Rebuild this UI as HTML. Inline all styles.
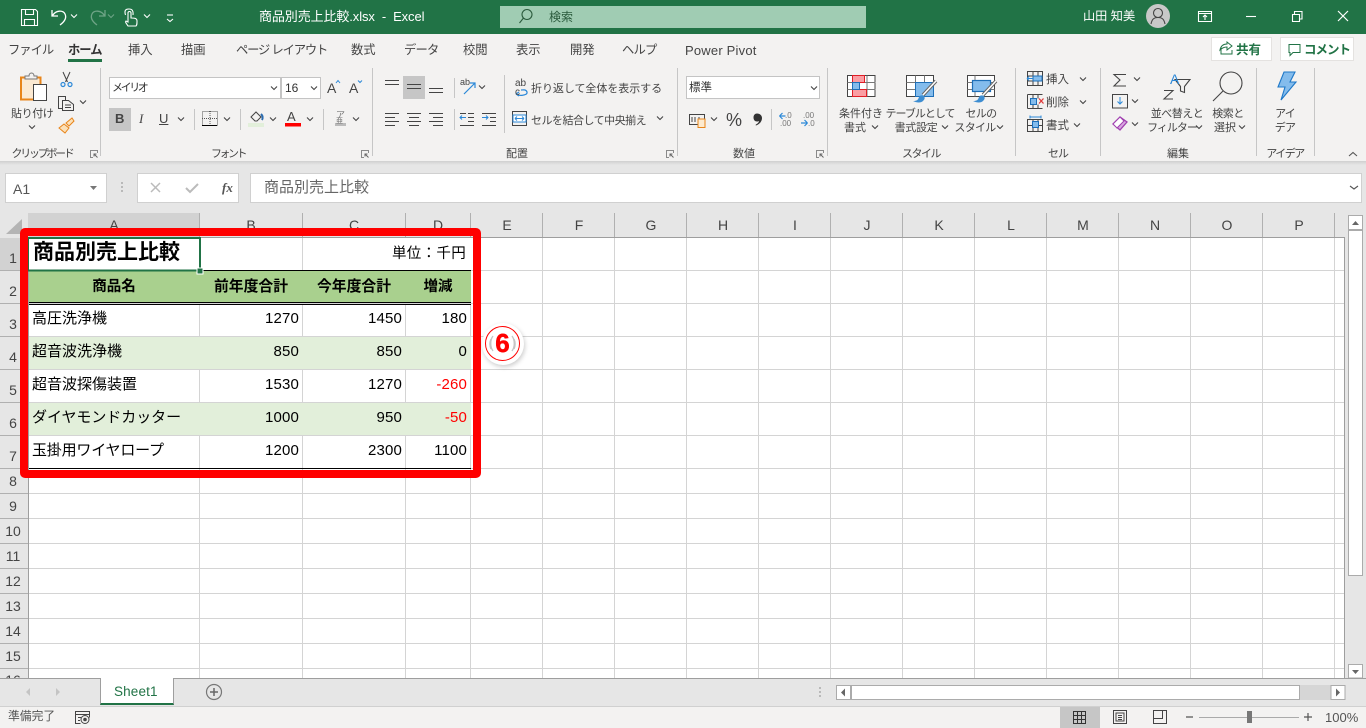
<!DOCTYPE html>
<html lang="ja"><head><meta charset="utf-8"><title>Excel</title>
<style>
html,body{margin:0;padding:0;width:1366px;height:728px;overflow:hidden;background:#fff}
body{position:relative;font-family:"Liberation Sans","Noto Sans CJK JP",sans-serif;color:#444}
.b{position:absolute}
svg{position:absolute;left:0;top:0}
.t{position:absolute;white-space:nowrap;line-height:1;font-size:11px;color:#444}
.c{transform:translateX(-50%)}
.r{text-align:right}
.tab{font-size:12.3px;top:44px}
.g{font-size:11px;top:149px}
.h{font-size:14px;color:#444;top:218px}
.rn{font-size:14px;color:#444;width:26px;left:0;text-align:center}
.n{font-size:15px;color:#000;letter-spacing:.15px}
.j{font-size:15px;color:#000}
.th{font-size:14px;font-weight:bold;color:#000;top:280px}
.red{color:#f00}
</style></head><body>
<div class="b" style="left:0;top:0;width:1366px;height:34px;background:#217346"></div>
<div class="b" style="left:0;top:34px;width:1366px;height:127px;background:#f3f2f1"></div>
<div class="b" style="left:0;top:161px;width:1366px;height:52px;background:#e6e6e6"></div>
<div class="b" style="left:0;top:161px;width:1366px;height:4px;background:linear-gradient(#cfcfcf,#e6e6e6)"></div>
<div class="b" style="left:500px;top:6px;width:366px;height:22px;background:#a0ccb3"></div>
<div class="b" style="left:1212px;top:38px;width:59px;height:22px;background:#fff;box-shadow:0 0 0 1px #e4e2e0"></div>
<div class="b" style="left:1281px;top:38px;width:72px;height:22px;background:#fff;box-shadow:0 0 0 1px #e4e2e0"></div>
<div class="b" style="left:68px;top:59px;width:34px;height:3px;background:#217346"></div>
<div class="b" style="left:109px;top:77px;width:170px;height:20px;background:#fff;border:1px solid #c4c4c4"></div>
<div class="b" style="left:281px;top:77px;width:38px;height:20px;background:#fff;border:1px solid #c4c4c4"></div>
<div class="b" style="left:686px;top:76px;width:132px;height:21px;background:#fff;border:1px solid #c4c4c4"></div>
<div class="b" style="left:109px;top:108px;width:22px;height:23px;background:#c6c6c6"></div>
<div class="b" style="left:403px;top:76px;width:22px;height:23px;background:#c6c6c6"></div>
<div class="b" style="left:5px;top:173px;width:100px;height:28px;background:#fff;border:1px solid #d0d0d0"></div>
<div class="b" style="left:137px;top:173px;width:100px;height:28px;background:#fff;border:1px solid #d0d0d0"></div>
<div class="b" style="left:250px;top:173px;width:1110px;height:28px;background:#fff;border:1px solid #d0d0d0"></div>

<svg width="1366" height="728" viewBox="0 0 1366 728" fill="none">
<defs><path id="v" d="M-3-1.5 0 1.5 3-1.5" stroke="#444" stroke-width="1.1"/><path id="w" d="M-3-1.5 0 1.5 3-1.5" stroke="#fff" stroke-width="1.1"/>
<g id="l"><path d="M.5.5h7v7h-7z" stroke="#8a8a8a" stroke-width="1"/><path d="M3 3h5v5H3z" fill="#f3f2f1"/><path d="M7.5 7.5 4 4M4 6.5V4h2.500" stroke="#666"/></g></defs>
<!-- sheet -->
<rect x="0" y="213" width="1366" height="465" fill="#e6e6e6"/>
<rect x="29" y="238" width="1315" height="440" fill="#fff"/>
<rect x="28" y="213" width="171" height="24" fill="#d2d2d2"/>
<rect x="0" y="238" width="28" height="32" fill="#d2d2d2"/>
<path d="M22 219 6 234H22z" fill="#b4b4b4"/>
<g stroke="#d4d4d4" stroke-width="1">
<path d="M199.500 238V678M302.500 238V678M405.500 271V678M470.500 271V678M542.500 238V678M614.500 238V678M686.500 238V678M758.500 238V678M830.500 238V678M902.500 238V678M974.500 238V678M1046.500 238V678M1118.500 238V678M1190.500 238V678M1262.500 238V678M1334.500 238V678"/>
<path d="M29 270.500H1344M29 303.500H1344M29 336.500H1344M29 369.500H1344M29 402.500H1344M29 435.500H1344M29 468.500H1344M29 493.500H1344M29 518.500H1344M29 543.500H1344M29 568.500H1344M29 593.500H1344M29 618.500H1344M29 643.500H1344M29 668.500H1344"/>
</g>
<g stroke="#b0b0b0"><path d="M199.500 213V237M302.500 213V237M405.500 213V237M470.500 213V237M542.500 213V237M614.500 213V237M686.500 213V237M758.500 213V237M830.500 213V237M902.500 213V237M974.500 213V237M1046.500 213V237M1118.500 213V237M1190.500 213V237M1262.500 213V237M1334.500 213V237"/>
<path d="M0 270.500H28M0 303.500H28M0 336.500H28M0 369.500H28M0 402.500H28M0 435.500H28M0 468.500H28M0 493.500H28M0 518.500H28M0 543.500H28M0 568.500H28M0 593.500H28M0 618.500H28M0 643.500H28M0 668.500H28"/>
</g>
<path d="M28.500 678V237.500H1344.500V678" stroke="#9e9e9e"/>
<rect x="29" y="271" width="442" height="31" fill="#a9d08e"/>
<rect x="29" y="337" width="442" height="32" fill="#e2efda"/>
<rect x="29" y="403" width="442" height="32" fill="#e2efda"/>
<path d="M29 270.500H471M29 302.500H471M29 304.500H471M29 468.500H471" stroke="#000"/>
<rect x="28" y="238" width="172" height="32.500" stroke="#217346" stroke-width="2"/>
<rect x="197" y="268" width="6" height="6" fill="#217346" stroke="#fff"/>
<!-- vertical scrollbar -->
<rect x="1348.500" y="215.500" width="14" height="14" fill="#fff" stroke="#ababab"/><path d="M1352 225h7l-3.500-4z" fill="#666"/>
<rect x="1348.500" y="230.500" width="14" height="345" fill="#fff" stroke="#ababab"/>
<rect x="1348.500" y="664.500" width="14" height="13.500" fill="#fff" stroke="#ababab"/><path d="M1352 670h7l-3.500 4z" fill="#666"/>
<!-- title icons -->
<g stroke="#fff" stroke-width="1.100">
<path d="M21.500 9.500h14l2 2v14h-16zM25.500 9.500v5h8v-5M24.500 25.500v-6h10v6"/>
<path d="M52 10v6h6M52.500 15.500C56 10 63 10 65 14c2 4-1 8-5 11" stroke-width="1.300"/>
<g stroke-opacity=".35"><path d="M105 10v6h-6M104.500 15.500C101 10 94 10 92 14c-2 4 1 8 5 11" stroke-width="1.300"/></g>
<path d="M128 26c-2-3-3-4-2-5l2 1v-9c0-2 3-2 3 0v5c3 0 6 0 6 3 0 3 0 4-1 5zM125.500 15c-1.500-5 .5-6 3.500-6s4.500 1.500 4 6"/>
<path d="M167 15h6"/><path d="M167 19l3 2.500 3-2.500"/>
</g>
<use href="#w" x="74" y="16"/><use href="#w" x="111" y="16" opacity=".35"/><use href="#w" x="147" y="16"/>
<g stroke="#2a5a3c" stroke-width="1.100"><circle cx="527" cy="14.500" r="5"/><path d="M523.500 18 519.500 23"/></g>
<circle cx="1158" cy="16" r="12" fill="#c8c8c8"/><g stroke="#444" stroke-width="1.100"><circle cx="1158" cy="13" r="4.500"/><path d="M1151 24c1-5 3-6.500 7-6.500s6 1.500 7 6.500"/></g>
<g stroke="#fff" stroke-width="1.100">
<path d="M1198.500 11.500h13v10h-13zM1198.500 13.500h13M1205 20v-5M1203 17l2-2 2 2"/>
<path d="M1246 16.500h10"/>
<path d="M1292.500 14.500h7v7h-7zM1294.500 14v-2.500h7.500v7.500h-2.500"/>
<path d="M1338 11l10 10M1348 11l-10 10" stroke-width="1.200"/>
</g>
<!-- share / comment icons -->
<g stroke="#217346"><path d="M1221 47v7h11v-4M1220 50c1-5 4-6 7-6v-2l5 4-5 4v-3c-3 0-5 1-7 3z"/></g>
<path d="M1289 44.500h11v8h-7l-3 3v-3h-1z" stroke="#217346"/>
<!-- group separators -->
<g stroke="#c6c6c6"><path d="M100.500 68V156M372.500 68V156M677.500 68V156M827.500 68V156M1015.500 68V156M1100.500 68V156M1256.500 68V156M1314.500 68V156"/>
<path d="M194.500 109V130M240.500 109V130M323.500 109V130M454.500 78V98M454.500 109V130M504.500 75V133M771.500 109V130"/></g>
<!-- clipboard -->
<path d="M21 77.500h19.500v22H21z" fill="#fbe9d2" stroke="#e8851a" stroke-width="2"/><path d="M25 78v-2h4c0-4 5-4 5 0h3v3H25z" fill="#f3f2f1" stroke="#777"/><rect x="33.500" y="84.500" width="13" height="16" fill="#fff" stroke="#444"/>
<g stroke="#444"><path d="M63 72l4.500 10M70 72l-4.500 10"/></g><g stroke="#2b88d8" stroke-width="1.200"><circle cx="63" cy="84.500" r="2"/><circle cx="70" cy="84.500" r="2"/></g>
<g stroke="#444"><path d="M58.500 96.500h7v12h-7z"/><path d="M62.500 100.500h6l5 4v6h-11z" fill="#f3f2f1"/><path d="M65 105h6M65 107.500h6"/></g><use href="#v" x="83" y="102"/>
<path d="M59 128l6 5 4-5-5-4zM66 123l6-5 2 3-5 5z" fill="#fbe0b8" stroke="#e8851a"/>
<use href="#v" x="32" y="127"/>
<use href="#l" x="90" y="150"/><use href="#l" x="361" y="150"/><use href="#l" x="666" y="150"/><use href="#l" x="816" y="150"/>
<use href="#v" x="274" y="88"/><use href="#v" x="314" y="88"/><use href="#v" x="181" y="119"/><use href="#v" x="227" y="119"/><use href="#v" x="273" y="119"/><use href="#v" x="310" y="119"/><use href="#v" x="356" y="119"/><use href="#v" x="482" y="87"/><use href="#v" x="660" y="118"/><use href="#v" x="814" y="88"/><use href="#v" x="714" y="119"/>
<path d="M336 83l2-2.500 2 2.500M358 80.500l2 2 2-2" stroke="#2b88d8"/>
<!-- borders icon -->
<path d="M202.500 111.500h15v14h-15zM210 111v14M202 118.500h15" stroke="#555" stroke-dasharray="1 1"/><path d="M202 125.500h15" stroke="#000"/>
<!-- fill -->
<path d="M251 117l5-5 5 5-4 4h-2z" stroke="#444"/><path d="M261 114c2 2 2 4 1 6" stroke="#2b6cb0" stroke-width="2"/><rect x="248" y="123" width="16" height="4" fill="#e2efda"/>
<rect x="285" y="123" width="16" height="3.500" fill="#f00"/>
<rect x="335" y="123" width="11" height="3" fill="#bbb"/>
<!-- alignment -->
<g stroke="#444">
<path d="M385 80.500h14M385 84.500h14"/><path d="M407 84.500h14M407 88.500h14"/><path d="M429 88.500h14M429 92.500h14M431 84.500h0"/>
<path d="M385 113.500h14M385 117.500h10M385 121.500h14M385 125.500h10"/>
<path d="M407 113.500h14M409 117.500h10M407 121.500h14M409 125.500h10"/>
<path d="M429 113.500h14M433 117.500h10M429 121.500h14M433 125.500h10"/>
<path d="M468 113.500h6M468 117.500h6M468 121.500h6M460 125.500h14M460 113.500h6"/>
<path d="M482 113.500h14M490 117.500h6M490 121.500h6M482 125.500h14"/>
</g>
<path d="M466 117.500h-6m2-2-2 2 2 2M482 117.500h6m-2-2 2 2-2 2" stroke="#2b88d8"/>
<path d="M464 94l11-11m-5 0h5v5" stroke="#2b88d8" stroke-width="1.200"/>
<!-- wrap/merge -->
<path d="M516 94c2 2 12 2 11-2-1-3-4-2-6-2M516 94l3-2M516 94l3 2" stroke="#2b88d8" stroke-width="1.200"/>
<rect x="512.500" y="111.500" width="14" height="14" stroke="#444"/><rect x="513" y="115" width="13" height="7" fill="#fff" stroke="#2b88d8"/><path d="M515 118.500h9M515 118.500l2-2M515 118.500l2 2M524 118.500l-2-2M524 118.500l-2 2" stroke="#2b88d8"/>
<!-- number -->
<rect x="689.500" y="114.500" width="15" height="10" stroke="#444"/><path d="M692 117v5M695 117v5M699 117v5" stroke="#444"/><rect x="698" y="119" width="7" height="8.500" fill="#fdebd0" stroke="#e8851a"/>
<path d="M757 113.500c3 0 5 2 5 4.500 0 3-2 6-6 7.500-.5-.3-.5-.8 0-1 2-1 3-2.500 3-3.500-.5.3-1 .5-2 .5-2 0-3.500-1.500-3.500-4s1.500-4 3.500-4z" fill="#333"/>
<path d="M779.500 116h6m-6 0 3-3m-3 3 3 3M801 123h6.500m0 0-3-3m3 3-3 3" stroke="#2b88d8" stroke-width="1.200"/>
<!-- cond format -->
<g><path d="M847.500 75.500h27.500v21h-27.500z" fill="#fff" stroke="#444"/><path d="M847.500 82.500h28M847.500 89.500h28M857 75.500v21M867 75.500v21" stroke="#777"/><rect x="852.500" y="75.500" width="12" height="7" fill="#fa9ea3" stroke="#e01e26"/><rect x="852.500" y="89.500" width="14" height="7" fill="#fa9ea3" stroke="#e01e26"/><rect x="852.500" y="82.500" width="7" height="7" fill="#84bcec" stroke="#1e6fb8"/></g>
<g><path d="M906.500 75.500h27v21h-27z" fill="#fff" stroke="#444"/><path d="M906.500 82.500h27M906.500 89.500h27M915.500 75.500v21M924.500 75.500v21" stroke="#777"/><rect x="915.500" y="82.500" width="18" height="14" fill="#84bcec" stroke="#1e6fb8"/><path d="M936 81 923 95" stroke="#666" stroke-width="3.500"/><path d="M936 81 923 95" stroke="#fff" stroke-width="1.500"/><path d="M913 101c4 0 5-1 6-4 1-2 3-2 5-1 1 2 1 3-1 5-2 2-6 2-10 0z" fill="#3d8dd1"/></g>
<g><path d="M967.500 75.500h27v21h-27z" fill="#fff" stroke="#444"/><path d="M975 75.500v21M967.500 82.500h27M967.500 89.500h27" stroke="#777"/><rect x="972.500" y="80.500" width="18" height="11" fill="#84bcec" stroke="#1e6fb8" stroke-width="1.200"/><path d="M996 81 983 95" stroke="#666" stroke-width="3.500"/><path d="M996 81 983 95" stroke="#fff" stroke-width="1.500"/><path d="M973 101c4 0 5-1 6-4 1-2 3-2 5-1 1 2 1 3-1 5-2 2-6 2-10 0z" fill="#3d8dd1"/></g>
<use href="#v" x="875" y="127"/><use href="#v" x="945" y="127"/><use href="#v" x="1000" y="127"/>
<!-- cells -->
<g stroke="#444"><path d="M1027.500 71.500h15v14h-15zM1027.500 76h15M1027.500 81h15M1033 71.500v14M1038 71.500v14"/></g><rect x="1033" y="76" width="9" height="5" fill="#84bcec" stroke="#1e6fb8"/><path d="M1027 78.500h6m-6 0 2-2m-2 2 2 2" stroke="#2b88d8"/>
<g stroke="#444"><path d="M1027.500 94.500h15M1027.500 108.500h15M1027.500 94.500v14M1033 94.500v4M1033 104.500v4M1038 94.500v4M1038 104.500v4"/></g><rect x="1030.500" y="98.500" width="6" height="6" fill="#84bcec" stroke="#1e6fb8"/><path d="M1039 98.500l4.500 5M1043.500 98.500l-4.500 5" stroke="#e03a3a" stroke-width="1.300"/>
<g stroke="#444"><path d="M1027.500 119.500h15v12h-15zM1027.500 125.500h15M1033 119.500v12M1038 119.500v12"/></g><rect x="1032.500" y="121.500" width="6" height="6" fill="#84bcec" stroke="#1e6fb8"/><path d="M1030 117h11M1030 115.500v3M1041 115.500v3" stroke="#2b88d8"/>
<use href="#v" x="1083" y="79"/><use href="#v" x="1083" y="102"/><use href="#v" x="1077" y="125"/>
<!-- editing -->
<path d="M1126 73.500h-12l6 5.500-6 6h12" stroke="#444" stroke-width="1.100" transform="translate(0 1)"/><use href="#v" x="1137" y="79"/>
<rect x="1112.500" y="94.500" width="15" height="13.500" stroke="#444"/><path d="M1120 97v7m-2.500-2.500 2.500 2.500 2.500-2.500" stroke="#2b88d8"/><use href="#v" x="1135" y="101"/>
<path d="M1113 124l7-7 7 5-7 8z" fill="#d8a8e0" stroke="#a040b0" stroke-width="1.300"/><path d="M1113 124l4 4 7-7-4-4z" fill="#fff" stroke="#a040b0"/><use href="#v" x="1135" y="124"/>
<path d="M1175 79.500h15l-5.500 7v6l-4-1.500v-4.500z" stroke="#444" stroke-width="1.100"/>
<g stroke="#444" stroke-width="1.100"><path d="M1164 90.500h9l-9 8.500h9"/></g>
<circle cx="1231" cy="83" r="11" stroke="#444" stroke-width="1.100"/><path d="M1223 91l-10 10" stroke="#444" stroke-width="1.100"/>
<path d="M1285 72h11l-5 10h6l-15 18 4-13h-7z" fill="#84bcec" stroke="#1e78c8" stroke-width="1.100" transform="translate(-1 0)"/>
<use href="#v" x="1199" y="127"/><use href="#v" x="1242" y="127"/>
<path d="M1349 156l4-3.500 4 3.500" stroke="#555" stroke-width="1.100"/>
<!-- formula bar -->
<path d="M90 186h7l-3.500 4z" fill="#777"/>
<circle cx="122" cy="183" r=".9" fill="#999"/><circle cx="122" cy="187" r=".9" fill="#999"/><circle cx="122" cy="191" r=".9" fill="#999"/>
<path d="M151 183l9 9M160 183l-9 9" stroke="#bbb" stroke-width="1.500"/>
<path d="M186 188l4 4 8-8" stroke="#bbb" stroke-width="2"/>
<path d="M1350 186l4 3 4-3" stroke="#555" stroke-width="1.100"/>
</svg>

<!-- ribbon text -->
<span class="t" style="left:259px;top:10px;font-size:13px;color:#fff;letter-spacing:-.1px">商品別売上比較.xlsx &nbsp;-&nbsp; Excel</span>
<span class="t" style="left:549px;top:11px;font-size:12px;color:#2a5a3c">検索</span>
<span class="t" style="left:1083px;top:10px;font-size:12.200px;color:#fff">山田 知美</span>
<span class="t tab" style="left:8px;letter-spacing:-1px">ファイル</span>
<span class="t tab" style="left:68px;font-weight:bold;letter-spacing:-1px;color:#333">ホーム</span>
<span class="t tab" style="left:128px">挿入</span>
<span class="t tab" style="left:181px">描画</span>
<span class="t tab" style="left:236px;letter-spacing:-1.150px">ページ レイアウト</span>
<span class="t tab" style="left:351px">数式</span>
<span class="t tab" style="left:404px;letter-spacing:-.8px">データ</span>
<span class="t tab" style="left:463px">校閲</span>
<span class="t tab" style="left:516px">表示</span>
<span class="t tab" style="left:570px">開発</span>
<span class="t tab" style="left:622px;letter-spacing:-.8px">ヘルプ</span>
<span class="t tab" style="left:685px;font-size:13px;letter-spacing:.2px">Power Pivot</span>
<span class="t" style="left:1236px;top:44px;font-size:12.500px;font-weight:bold;color:#217346">共有</span>
<span class="t" style="left:1304px;top:44px;font-size:12.500px;font-weight:bold;color:#217346;letter-spacing:-1px">コメント</span>
<span class="t" style="left:112px;top:83px;font-size:11px;letter-spacing:-2.400px;color:#333">メイリオ</span>
<span class="t" style="left:285px;top:82px;font-size:12px;color:#333">16</span>
<span class="t" style="left:11px;top:109px;letter-spacing:-.4px">貼り付け</span>
<span class="t" style="left:327px;top:81px;font-size:14px">A</span><span class="t" style="left:349px;top:81px;font-size:14px">A</span>
<span class="t" style="left:115px;top:112px;font-size:13px;font-weight:bold">B</span>
<span class="t" style="left:139px;top:112px;font-size:13px;font-style:italic;font-family:'Liberation Serif',serif">I</span>
<span class="t" style="left:159px;top:112px;font-size:13px;text-decoration:underline">U</span>
<span class="t" style="left:287px;top:110px;font-size:13px">A</span>
<span class="t" style="left:336px;top:111px;font-size:9px;color:#777">ア</span>
<span class="t" style="left:336px;top:118px;font-size:7px;color:#777">亜</span>
<span class="t" style="left:460px;top:78px;font-size:9px">ab</span>
<span class="t" style="left:515px;top:79px;font-size:10px">ab</span>
<span class="t" style="left:515px;top:88px;font-size:10px">c</span>
<span class="t" style="left:531px;top:84px;font-size:11px;letter-spacing:-.05px">折り返して全体を表示する</span>
<span class="t" style="left:531px;top:116px;font-size:11px;letter-spacing:-.5px">セルを結合して中央揃え</span>
<span class="t" style="left:689px;top:83px;font-size:11.500px;color:#333">標準</span>
<span class="t" style="left:726px;top:111px;font-size:18px">%</span>
<span class="t" style="left:785px;top:112px;font-size:8px;color:#777">.0</span><span class="t" style="left:780px;top:120px;font-size:8px;color:#777">.00</span>
<span class="t" style="left:803px;top:112px;font-size:8px;color:#777">.00</span><span class="t" style="left:808px;top:120px;font-size:8px;color:#777">.0</span>
<span class="t c" style="left:861px;top:109px">条件付き</span>
<span class="t c" style="left:855px;top:123px">書式</span>
<span class="t c" style="left:920px;top:109px;letter-spacing:-1px">テーブルとして</span>
<span class="t c" style="left:916px;top:123px;letter-spacing:-.3px">書式設定</span>
<span class="t c" style="left:981px;top:109px;letter-spacing:-.7px">セルの</span>
<span class="t c" style="left:975px;top:123px;letter-spacing:-.7px">スタイル</span>
<span class="t" style="left:1046px;top:75px;font-size:11.500px">挿入</span>
<span class="t" style="left:1046px;top:98px;font-size:11.500px">削除</span>
<span class="t" style="left:1046px;top:121px;font-size:11.500px">書式</span>
<span class="t c" style="left:1177px;top:109px;letter-spacing:-.5px">並べ替えと</span>
<span class="t c" style="left:1172px;top:123px;letter-spacing:-1px">フィルター</span>
<span class="t c" style="left:1228px;top:109px;letter-spacing:-.5px">検索と</span>
<span class="t c" style="left:1225px;top:123px">選択</span>
<span class="t c" style="left:1285px;top:109px;letter-spacing:-.8px">アイ</span>
<span class="t c" style="left:1285px;top:123px;letter-spacing:-.8px">デア</span>
<span class="t" style="left:1170px;top:72px;font-size:14px;color:#2b88d8">A</span>
<span class="t g c" style="left:42px;letter-spacing:-2.300px">クリップボード</span>
<span class="t g c" style="left:228px;letter-spacing:-2.500px">フォント</span>
<span class="t g c" style="left:517px">配置</span>
<span class="t g c" style="left:744px">数値</span>
<span class="t g c" style="left:921px;letter-spacing:-1.500px">スタイル</span>
<span class="t g c" style="left:1058px;letter-spacing:-1px">セル</span>
<span class="t g c" style="left:1178px">編集</span>
<span class="t g c" style="left:1285px;letter-spacing:-1.500px">アイデア</span>
<!-- formula bar -->
<span class="t" style="left:13px;top:182px;font-size:14px;color:#555">A1</span>
<span class="t" style="left:222px;top:181px;font-size:13px;font-style:italic;font-family:'Liberation Serif',serif;font-weight:bold;color:#555">fx</span>
<span class="t" style="left:264px;top:180px;font-size:15px;color:#666">商品別売上比較</span>
<!-- headers -->
<span class="t h c" style="left:114px">A</span><span class="t h c" style="left:251px">B</span><span class="t h c" style="left:354px">C</span><span class="t h c" style="left:438px">D</span><span class="t h c" style="left:507px">E</span><span class="t h c" style="left:579px">F</span><span class="t h c" style="left:651px">G</span><span class="t h c" style="left:723px">H</span><span class="t h c" style="left:795px">I</span><span class="t h c" style="left:867px">J</span><span class="t h c" style="left:939px">K</span><span class="t h c" style="left:1011px">L</span><span class="t h c" style="left:1083px">M</span><span class="t h c" style="left:1155px">N</span><span class="t h c" style="left:1227px">O</span><span class="t h c" style="left:1299px">P</span>
<span class="t rn" style="top:251px">1</span><span class="t rn" style="top:284px">2</span><span class="t rn" style="top:317px">3</span><span class="t rn" style="top:350px">4</span><span class="t rn" style="top:383px">5</span><span class="t rn" style="top:416px">6</span><span class="t rn" style="top:449px">7</span><span class="t rn" style="top:474px">8</span><span class="t rn" style="top:499px">9</span><span class="t rn" style="top:524px">10</span><span class="t rn" style="top:549px">11</span><span class="t rn" style="top:574px">12</span><span class="t rn" style="top:599px">13</span><span class="t rn" style="top:624px">14</span><span class="t rn" style="top:649px">15</span><span class="t rn" style="top:673px">16</span>
<!-- cells -->
<span class="t" style="left:33px;top:242px;font-size:21px;font-weight:bold;color:#000">商品別売上比較</span>
<span class="t" style="left:392px;top:247px;font-size:14.500px;color:#000;letter-spacing:.3px">単位：千円</span>
<span class="t th c" style="left:114px;font-size:14.500px">商品名</span>
<span class="t th c" style="left:251px;font-size:14.800px">前年度合計</span>
<span class="t th c" style="left:354px;font-size:14.800px">今年度合計</span>
<span class="t th c" style="left:438px;font-size:14.500px">増減</span>
<span class="t j" style="left:32px;top:311px">高圧洗浄機</span>
<span class="t j" style="left:32px;top:344px">超音波洗浄機</span>
<span class="t j" style="left:32px;top:377px">超音波探傷装置</span>
<span class="t j" style="left:32px;top:410px;letter-spacing:-.05px">ダイヤモンドカッター</span>
<span class="t j" style="left:32px;top:443px;letter-spacing:-.2px">玉掛用ワイヤロープ</span>
<span class="t n r" style="right:1067px;top:311px">1270</span><span class="t n r" style="right:964px;top:311px">1450</span><span class="t n r" style="right:899px;top:311px">180</span>
<span class="t n r" style="right:1067px;top:344px">850</span><span class="t n r" style="right:964px;top:344px">850</span><span class="t n r" style="right:899px;top:344px">0</span>
<span class="t n r" style="right:1067px;top:377px">1530</span><span class="t n r" style="right:964px;top:377px">1270</span><span class="t n r red" style="right:899px;top:377px">-260</span>
<span class="t n r" style="right:1067px;top:410px">1000</span><span class="t n r" style="right:964px;top:410px">950</span><span class="t n r red" style="right:899px;top:410px">-50</span>
<span class="t n r" style="right:1067px;top:443px">1200</span><span class="t n r" style="right:964px;top:443px">2300</span><span class="t n r" style="right:899px;top:443px">1100</span>
<!-- annotation -->
<div class="b" style="left:20px;top:228px;width:461px;height:250px;box-sizing:border-box;border:8px solid #f00;border-radius:5px"></div>
<div class="b" style="left:482px;top:323px;width:42px;height:42px;border-radius:50%;background:#fff;box-shadow:1px 2px 5px rgba(0,0,0,.2)"></div>
<div class="b" style="left:485px;top:326px;width:33px;height:33px;border:1.500px solid #f00;border-radius:50%"></div>
<svg width="1366" height="728" viewBox="0 0 1366 728" fill="none" style="pointer-events:none"><path d="M493 336c-3 4-3 11 0 15M491 339c-1.500 3-1.500 7 0 10M512 336c3 4 3 11 0 15M514 339c1.500 3 1.500 7 0 10" stroke="#c4c4c4" stroke-width="1.300"/></svg>
<span class="t c" style="left:502.500px;top:328px;font-size:26px;font-weight:bold;color:#f00;line-height:30px;-webkit-text-stroke:.5px #f00">6</span>
<!-- bottom -->
<div class="b" style="left:0;top:678px;width:1366px;height:28px;background:#e6e6e6;box-shadow:inset 0 1px 0 #9e9e9e"></div>
<div class="b" style="left:0;top:706px;width:1366px;height:22px;background:#f3f2f1;box-shadow:inset 0 1px 0 #d0d0d0"></div>
<div class="b" style="left:100px;top:678px;width:72px;height:25px;background:#fff;border-left:1px solid #9e9e9e;border-right:1px solid #9e9e9e;border-bottom:2px solid #217346"></div>
<div class="b" style="left:1060px;top:707px;width:40px;height:21px;background:#c6c6c6"></div>
<svg width="1366" height="728" viewBox="0 0 1366 728" fill="none" style="pointer-events:none">
<path d="M32 688v8l-4-4zM58 688v8l4-4z" fill="#c4c4c4" transform="translate(-2 0)"/>
<circle cx="214" cy="692" r="7.500" stroke="#777" stroke-width="1.200"/><path d="M210 692h8M214 688v8" stroke="#666" stroke-width="1.500"/>
<circle cx="820" cy="688" r=".9" fill="#999"/><circle cx="820" cy="692" r=".9" fill="#999"/><circle cx="820" cy="696" r=".9" fill="#999"/>
<rect x="836.500" y="685.500" width="14" height="14" fill="#fff" stroke="#ababab"/><path d="M845 688.500v8l-4-4z" fill="#666"/>
<rect x="851" y="685" width="480" height="15" fill="#d6d6d6"/>
<rect x="851.500" y="685.500" width="448" height="14" fill="#fff" stroke="#ababab"/>
<rect x="1331" y="685.500" width="14" height="14" fill="#fff" stroke="#ababab"/><path d="M1336 688.500v8l4-4z" fill="#666"/>
<g stroke="#444"><path d="M75.500 711.500h14v3h-14zM75.500 714.500v9h5M78 717.500h3M78 720.500h2M89.500 714.500v3"/><circle cx="85" cy="719.500" r="4"/></g><circle cx="85" cy="719.500" r="1.800" fill="#444"/>
<path d="M1073.500 711.500h12v12h-12zM1077.500 711.500v12M1081.500 711.500v12M1073.500 715.500h12M1073.500 719.500h12" stroke="#333"/>
<path d="M1113.500 710.500h13v13h-13zM1116 713h8v8h-8zM1118 715.500h4M1118 717.500h4M1118 719.500h4" stroke="#444"/>
<path d="M1153.500 710.500h13v13h-13zM1153.500 718.500h9v-8" stroke="#444"/>
<path d="M1186 717h7M1304 717h8M1308 713v8" stroke="#555" stroke-width="1.200"/>
<path d="M1199 717.500h100" stroke="#aaa"/><rect x="1247" y="711" width="5" height="12" fill="#777"/>
</svg>
<span class="t" style="left:114px;top:685px;font-size:13.500px;color:#217346;letter-spacing:.15px">Sheet1</span>
<span class="t" style="left:8px;top:711px;font-size:11.800px;color:#555">準備完了</span>
<span class="t" style="left:1325px;top:711px;font-size:13px;color:#555">100%</span>
</body></html>
